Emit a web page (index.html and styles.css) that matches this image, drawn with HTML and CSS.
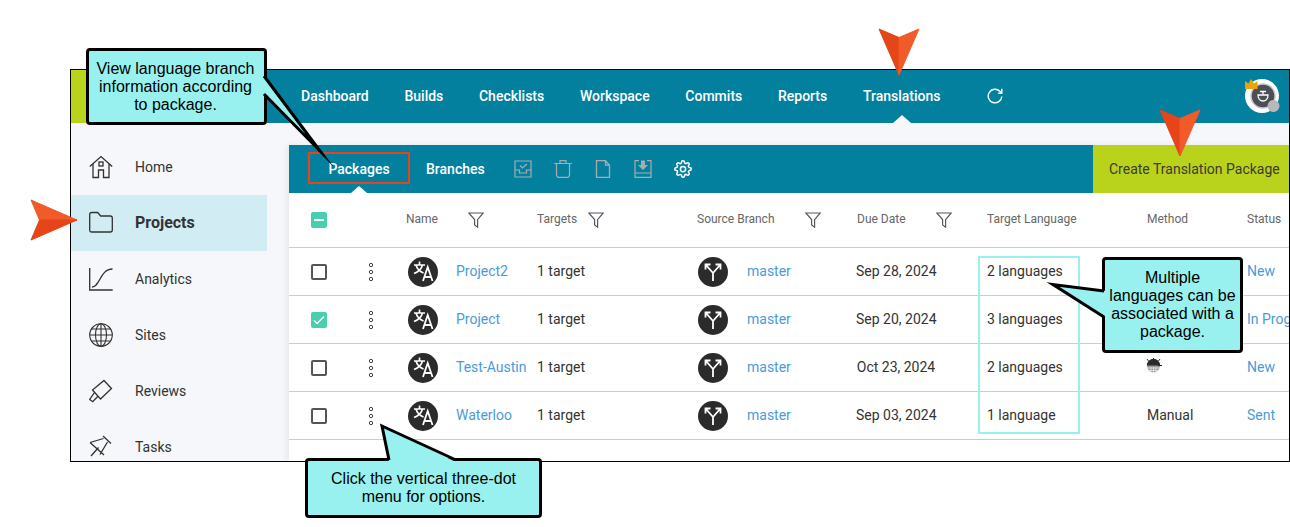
FILE: index.html

```html
<!DOCTYPE html>
<html lang="en">
<head>
  <meta charset="UTF-8" />
  <title>Translations</title>
  <link rel="stylesheet" href="styles.css">
</head>
<body>
  <svg class="defs" width="0" height="0">
    <symbol id="i-filter" viewBox="0 0 16 16">
      <path d="M.8 1h14.400L9.600 7.600v7.600L6.600 13V7.600z" fill="none" stroke="#5a5560" stroke-width="1.200"/>
    </symbol>
    <symbol id="i-dots" viewBox="0 0 8 20">
      <circle cx="4" cy="3" r="1.700"/><circle cx="4" cy="10" r="1.700"/><circle cx="4" cy="17" r="1.700"/>
    </symbol>
    <symbol id="i-translate" viewBox="0 0 30 30">
      <circle cx="15" cy="15" r="15" fill="#2b2b2b"/>
      <path d="M6 8h11M11.500 4.500V8M14.500 8c-1 4-4.500 7-8.500 8.500M8 8c1 4 4 6.500 7.500 8" fill="none" stroke="#fff" stroke-width="1.600"/>
      <path d="M15 24l4.700-14 4.800 14M16.800 20h6" fill="none" stroke="#fff" stroke-width="1.800"/>
    </symbol>
    <symbol id="i-branch" viewBox="0 0 30 30">
      <circle cx="15" cy="15" r="15" fill="#2b2b2b"/>
      <path d="M15 24v-8L8 8M15 16l7-8M7.500 12.500V7.500h5M22.500 12.500V7.500h-5" fill="none" stroke="#fff" stroke-width="1.800"/>
    </symbol>
  </svg>

  <div class="app">
    <header class="topbar">
      <div class="logo"></div>
      <nav class="main-nav">
        <a>Dashboard</a>
        <a>Builds</a>
        <a>Checklists</a>
        <a>Workspace</a>
        <a>Commits</a>
        <a>Reports</a>
        <a class="active">Translations</a>
      </nav>
      <svg class="refresh" width="16" height="16" viewBox="0 0 16 16" fill="none" stroke="#fff" stroke-width="1.400">
        <path d="M14.800 8.500a6.800 6.800 0 1 1-2-5.300L14.600 5"/>
        <path d="M14.800.8v4.500h-3.600"/>
      </svg>
      <svg class="user" width="36" height="36" viewBox="0 0 36 36">
        <circle cx="17" cy="18" r="17" fill="#fff"/>
        <circle cx="18" cy="18" r="12" fill="#4b4f55" stroke="#c4c6c8" stroke-width="1.500"/>
        <path d="M13 17h10c0 4-2.500 6-5 6s-5-2-5-6z" fill="none" stroke="#fff" stroke-width="1.300"/>
        <path d="M15 13.500h6M18 13.500v3" stroke="#fff" stroke-width="1.300"/>
        <path d="M0 3l3.500 2.500L6 1l3 4.500L12.500 3v8H0z" fill="#e6a50f"/>
        <circle cx="28.500" cy="28" r="6" fill="#b9b9b9"/>
      </svg>
    </header>

    <div class="content">
      <aside class="sidebar">
        <a class="side-item">
          <svg width="24" height="24" viewBox="0 0 24 24" fill="none" stroke="#33302f" stroke-width="1.300">
            <path d="M.8 11.500L12 1.500l11.200 10M4 9v13.500h5.500V15h5v7.500H20V9"/>
            <rect x="10" y="7" width="4" height="4"/>
          </svg>
          Home
        </a>
        <a class="side-item active">
          <svg width="24" height="24" viewBox="0 0 24 24" fill="none" stroke="#33302f" stroke-width="1.300">
            <path d="M.7 4.500q0-2 2-2h6l3 3.500h9.600q2 0 2 2v12q0 2-2 2H2.700q-2 0-2-2z"/>
          </svg>
          Projects
        </a>
        <a class="side-item">
          <svg width="24" height="24" viewBox="0 0 24 24" fill="none" stroke="#33302f" stroke-width="1.300">
            <path d="M.7 1v22h23"/>
            <path d="M3 20C11 20 11 2 23.500 2"/>
          </svg>
          Analytics
        </a>
        <a class="side-item">
          <svg width="24" height="24" viewBox="0 0 24 24" fill="none" stroke="#33302f" stroke-width="1.100">
            <circle cx="12" cy="12" r="11.300"/>
            <ellipse cx="12" cy="12" rx="5.500" ry="11.300"/>
            <path d="M12 .7v22.600M.7 12h22.600M2.500 6h19M2.500 18h19"/>
          </svg>
          Sites
        </a>
        <a class="side-item">
          <svg width="24" height="24" viewBox="0 0 24 24" fill="none" stroke="#33302f" stroke-width="1.300">
            <path d="M15 1.500l7.500 8-11 10.500-8-9zM5.500 13.500L.7 20.500l3 2.200 4.800-5"/>
          </svg>
          Reviews
        </a>
        <a class="side-item">
          <svg width="24" height="24" viewBox="0 0 24 24" fill="none" stroke="#33302f" stroke-width="1.300">
            <path d="M1 7.500L14.500 3.500M14 1l8 7.500M18.500 7L11 19.500M1 7.500l14 12.500M2 21l7.500-8.500"/>
          </svg>
          Tasks
        </a>
      </aside>

      <main class="card">
        <div class="toolbar">
          <a class="tab active">Packages</a>
          <a class="tab">Branches</a>
          <div class="tool-icons">
            <svg width="18" height="18" viewBox="0 0 18 18" fill="none" stroke="#a8acae" stroke-width="1.200">
              <path d="M1 1h16v16H1zM1 10h4.500v3h7v-3H17M6 5.500l2.500 2.500L13 4"/>
            </svg>
            <svg width="18" height="18" viewBox="0 0 18 18" fill="none" stroke="#a8acae" stroke-width="1.200">
              <path d="M0 3.500h18M6 3.500V.7h6v2.800M2.500 3.500v12l1.500 1.800h10l1.500-1.800v-12"/>
            </svg>
            <svg width="18" height="18" viewBox="0 0 18 18" fill="none" stroke="#a8acae" stroke-width="1.300">
              <path d="M2.500.7h9l4 4.500v12.100h-13zM11.500.7v4.500h4"/>
            </svg>
            <svg width="18" height="18" viewBox="0 0 18 18" fill="none" stroke="#a8acae" stroke-width="1.200">
              <path d="M5 .7H1v16.600h16V.7h-4M1 13h16"/>
              <path d="M7 .5h4v4.500h3l-5 5-5-5h3z" fill="#a8acae" stroke="none"/>
            </svg>
            <svg width="18" height="18" viewBox="0 0 24 24" fill="none" stroke="#fff" stroke-width="2">
              <circle cx="12" cy="12" r="3.500"/>
              <path d="M19.400 15a1.650 1.650 0 0 0 .33 1.820l.06.06a2 2 0 0 1 0 2.830 2 2 0 0 1-2.830 0l-.06-.06a1.650 1.650 0 0 0-1.820-.33 1.650 1.650 0 0 0-1 1.510V21a2 2 0 0 1-2 2 2 2 0 0 1-2-2v-.09A1.650 1.650 0 0 0 9 19.400a1.650 1.650 0 0 0-1.820.33l-.06.06a2 2 0 0 1-2.830 0 2 2 0 0 1 0-2.830l.06-.06a1.650 1.650 0 0 0 .33-1.820 1.650 1.650 0 0 0-1.510-1H3a2 2 0 0 1-2-2 2 2 0 0 1 2-2h.09A1.650 1.650 0 0 0 4.600 9a1.650 1.650 0 0 0-.33-1.820l-.06-.06a2 2 0 0 1 0-2.830 2 2 0 0 1 2.830 0l.06.06a1.650 1.650 0 0 0 1.820.33H9a1.650 1.650 0 0 0 1-1.510V3a2 2 0 0 1 2-2 2 2 0 0 1 2 2v.09a1.650 1.650 0 0 0 1 1.510 1.650 1.650 0 0 0 1.820-.33l.06-.06a2 2 0 0 1 2.830 0 2 2 0 0 1 0 2.830l-.06.06a1.650 1.650 0 0 0-.33 1.820V9a1.650 1.650 0 0 0 1.510 1H21a2 2 0 0 1 2 2 2 2 0 0 1-2 2h-.09a1.650 1.650 0 0 0-1.510 1z"/>
            </svg>
          </div>
          <a class="create-btn">Create Translation Package</a>
        </div>

        <div class="row head">
          <div><span class="check minus"></span></div>
          <div></div>
          <div class="cell">Name<svg class="filter wide"><use href="#i-filter"/></svg></div>
          <div class="cell">Targets<svg class="filter"><use href="#i-filter"/></svg></div>
          <div class="cell">Source Branch<svg class="filter wide"><use href="#i-filter"/></svg></div>
          <div class="cell">Due Date<svg class="filter wide"><use href="#i-filter"/></svg></div>
          <div class="cell">Target Language</div>
          <div class="cell">Method</div>
          <div class="cell">Status</div>
        </div>

        <div class="row">
          <div><span class="check"></span></div>
          <div><svg class="dots"><use href="#i-dots"/></svg></div>
          <div class="cell name"><svg class="round"><use href="#i-translate"/></svg><a>Project2</a></div>
          <div class="cell">1 target</div>
          <div class="cell branch"><svg class="round"><use href="#i-branch"/></svg><a>master</a></div>
          <div class="cell"><span class="due">Sep 28, 2024</span></div>
          <div class="cell">2 languages</div>
          <div class="cell"></div>
          <div class="cell"><a>New</a></div>
        </div>
        <div class="row">
          <div>
            <span class="check on">
              <svg width="16" height="16" viewBox="0 0 16 16" fill="none" stroke="#fff" stroke-width="1.500"><path d="M3 8.500l3.200 3L13 4.500"/></svg>
            </span>
          </div>
          <div><svg class="dots"><use href="#i-dots"/></svg></div>
          <div class="cell name"><svg class="round"><use href="#i-translate"/></svg><a>Project</a></div>
          <div class="cell">1 target</div>
          <div class="cell branch"><svg class="round"><use href="#i-branch"/></svg><a>master</a></div>
          <div class="cell"><span class="due">Sep 20, 2024</span></div>
          <div class="cell">3 languages</div>
          <div class="cell"></div>
          <div class="cell"><a>In Progress</a></div>
        </div>
        <div class="row">
          <div><span class="check"></span></div>
          <div><svg class="dots"><use href="#i-dots"/></svg></div>
          <div class="cell name"><svg class="round"><use href="#i-translate"/></svg><a>Test-Austin</a></div>
          <div class="cell">1 target</div>
          <div class="cell branch"><svg class="round"><use href="#i-branch"/></svg><a>master</a></div>
          <div class="cell"><span class="due">Oct 23, 2024</span></div>
          <div class="cell">2 languages</div>
          <div class="cell">
            <svg class="method" width="16" height="16" viewBox="0 0 16 16">
              <circle cx="7.500" cy="8" r="6.500" fill="#9a9a9a"/>
              <path d="M.8 7.500a6.700 6.700 0 0 1 13.400 0z" fill="#2b2b2b"/>
              <path d="M1 10h13M2 12.500h11M5 9v6M7.500 9v6M10 9v6" stroke="#f2f2f2" stroke-width=".7"/>
              <path d="M2.500 3L1 1M12.500 3L14 1M7.500 1V0M12 7.500h4" stroke="#2b2b2b"/>
            </svg>
          </div>
          <div class="cell"><a>New</a></div>
        </div>
        <div class="row">
          <div><span class="check"></span></div>
          <div><svg class="dots"><use href="#i-dots"/></svg></div>
          <div class="cell name"><svg class="round"><use href="#i-translate"/></svg><a>Waterloo</a></div>
          <div class="cell">1 target</div>
          <div class="cell branch"><svg class="round"><use href="#i-branch"/></svg><a>master</a></div>
          <div class="cell"><span class="due">Sep 03, 2024</span></div>
          <div class="cell">1 language</div>
          <div class="cell">Manual</div>
          <div class="cell"><a>Sent</a></div>
        </div>
      </main>
    </div>
  </div>

  <!-- annotations on top of the screenshot -->
  <div class="lang-box"></div>

  <div class="callout callout-view">
    View language branch information according to package.
    <svg class="tail">
      <polygon points="174,25 231,100 174,43" fill="#98f1ee"/>
      <polyline points="175,25 231,100 175,43" fill="none" stroke="#000" stroke-width="3" stroke-miterlimit="20"/>
    </svg>
  </div>
  <div class="callout callout-multi">
    Multiple languages can be associated with a package.
    <svg class="tail">
      <polygon points="1,31 -52,24.500 1,57" fill="#98f1ee"/>
      <polyline points="-1,31 -52,24.500 -1,57" fill="none" stroke="#000" stroke-width="3" stroke-miterlimit="20"/>
    </svg>
  </div>
  <div class="callout callout-dots">
    Click the vertical three-dot menu for options.
    <svg class="tail">
      <polygon points="81,1 74,-35 148,1" fill="#98f1ee"/>
      <polyline points="81,-1 74,-35 148,-1" fill="none" stroke="#000" stroke-width="3" stroke-miterlimit="20"/>
    </svg>
  </div>

  <svg class="arrow arrow-nav" width="42" height="48" viewBox="0 0 42 48">
    <path d="M1 1l20 8.500V47z" fill="#e64419" stroke="#e64419" stroke-linejoin="round"/>
    <path d="M41 1L21 9.500V47z" fill="#f15a29" stroke="#f15a29" stroke-linejoin="round"/>
  </svg>
  <svg class="arrow arrow-create" width="42" height="48" viewBox="0 0 42 48">
    <path d="M1 1l20 8.500V47z" fill="#e64419" stroke="#e64419" stroke-linejoin="round"/>
    <path d="M41 1L21 9.500V47z" fill="#f15a29" stroke="#f15a29" stroke-linejoin="round"/>
  </svg>
  <svg class="arrow arrow-side" width="48" height="42" viewBox="0 0 48 42">
    <path d="M1 1l8.500 20H47z" fill="#f15a29" stroke="#f15a29" stroke-linejoin="round"/>
    <path d="M1 41l8.500-20H47z" fill="#e64419" stroke="#e64419" stroke-linejoin="round"/>
  </svg>
</body>
</html>
```

FILE: styles.css

```css
html, body {
  margin: 0;
  height: 100%;
  background: #fff;
  font-family: Roboto, sans-serif;
  font-size: 14px;
  color: #333;
}

body {
  position: relative;
  box-sizing: border-box;
  width: 1290px;
  height: 527px;
  padding: 69px 0 0 70px;
  overflow: hidden;
}

.defs {
  position: absolute;
}

.app {
  box-sizing: border-box;
  width: 1220px;
  height: 393px;
  border: 1px solid #000;
  display: flex;
  flex-direction: column;
  overflow: hidden;
}

/* top bar */
.topbar {
  height: 53px;
  flex: none;
  display: flex;
  align-items: center;
  background: #04809f;
  padding-right: 8px;
}

.logo {
  width: 196px;
  align-self: stretch;
  background: #b9d21c;
}

.main-nav {
  display: flex;
  align-self: stretch;
  gap: 35.7px;
  margin-left: 34px;
}

.main-nav a {
  position: relative;
  display: flex;
  align-items: center;
  padding-bottom: 1px;
  color: #fff;
  font-weight: 500;
}

.main-nav a.active::after {
  content: "";
  position: absolute;
  left: 50%;
  bottom: 0;
  margin-left: -9px;
  border: 9px solid transparent;
  border-top: 0;
  border-bottom: 8px solid #f5f7fb;
}

.refresh {
  margin-left: 46px;
  margin-bottom: 2px;
}

.user {
  margin-left: auto;
  margin-bottom: 2px;
}

/* sidebar + content */
.content {
  flex: 1;
  display: flex;
  min-height: 0;
  background: #f5f7fb;
}

.sidebar {
  width: 218px;
  flex: none;
  padding-top: 16px;
}

.side-item {
  width: 196px;
  height: 56px;
  display: flex;
  align-items: center;
  gap: 22px;
  padding-left: 18px;
  box-sizing: border-box;
}

.side-item.active {
  background: #d2ecf3;
  font-size: 16px;
  font-weight: 700;
  padding-bottom: 2px;
}

.card {
  flex: 1;
  min-width: 0;
  margin-top: 22px;
  background: #fff;
  box-shadow: -3px 0 6px rgba(0, 0, 0, 0.06);
}

.toolbar {
  height: 48px;
  display: flex;
  align-items: center;
  background: #04809f;
  padding-left: 19px;
}

.tab {
  color: #fff;
  font-weight: 500;
  margin-right: 16px;
  position: relative;
}

.tab.active {
  box-sizing: border-box;
  width: 102px;
  height: 32px;
  margin-top: -2px;
  padding-top: 2px;
  display: flex;
  align-items: center;
  justify-content: center;
  border: 2px solid #e8431f;
}

.tab.active::after {
  content: "";
  position: absolute;
  left: 50%;
  bottom: -11px;
  margin-left: -8px;
  border: 8px solid transparent;
  border-top: 0;
  border-bottom: 7px solid #fff;
}

.tool-icons {
  display: flex;
  gap: 22px;
  margin-left: 13px;
}

.create-btn {
  margin-left: auto;
  width: 196px;
  flex: none;
  height: 48px;
  box-sizing: border-box;
  padding-left: 16px;
  display: flex;
  align-items: center;
  background: #b9d21c;
  color: #3d3a2c;
}

/* table */
.row {
  box-sizing: border-box;
  height: 48px;
  padding-left: 22px;
  display: grid;
  grid-template-columns: 54px 41px 131px 160px 160px 130px 160px 100px 60px;
  align-items: center;
  border-bottom: 1px solid #ccc;
  overflow: hidden;
}

.row.head {
  height: 55px;
  font-size: 12px;
  color: #666;
}

.row > div:first-child {
  display: flex;
  padding-top: 1px;
}

.row.head > div:first-child {
  padding-top: 0;
}

.cell {
  display: flex;
  align-items: center;
  padding-bottom: 2px;
  white-space: nowrap;
}

.cell a {
  color: #4a9bd9;
}

.check {
  box-sizing: border-box;
  width: 16px;
  height: 16px;
  border: 2px solid #555;
  border-radius: 2px;
  display: block;
}

.check.on, .check.minus {
  border: 0;
  background: #47cfae;
}

.check.on svg {
  display: block;
}

.check.minus {
  position: relative;
}

.check.minus::after {
  content: "";
  position: absolute;
  left: 3px;
  right: 3px;
  top: 7px;
  height: 2px;
  background: #fff;
}

.filter {
  width: 16px;
  height: 16px;
  margin: 2px 0 0 11px;
}

.filter.wide {
  margin-left: 30px;
}

.dots {
  display: block;
  width: 8px;
  height: 20px;
  margin: 1px 0 0 2px;
  fill: none;
  stroke: #3f3f52;
  stroke-width: 1;
}

.round {
  width: 30px;
  height: 30px;
  flex: none;
}

.name .round {
  margin: 3px 18px 0 2px;
}

.branch .round {
  margin: 3px 19px 0 1px;
}

.due {
  width: 80px;
  margin-left: -1px;
  text-align: center;
}

.method {
  margin: -2px 0 0 -1px;
}

/* annotations */
.lang-box {
  position: absolute;
  left: 978px;
  top: 256px;
  width: 102px;
  height: 178px;
  box-sizing: border-box;
  border: 2px solid #98f1ee;
}

.callout {
  position: absolute;
  box-sizing: border-box;
  display: flex;
  align-items: center;
  justify-content: center;
  text-align: center;
  background: #98f1ee;
  border: 3px solid #000;
  border-radius: 4px;
  color: #000;
  font-family: "Liberation Sans", Arial, sans-serif;
  font-size: 16px;
  line-height: 18px;
}

.callout-view {
  left: 86px;
  top: 48px;
  width: 181px;
  height: 77px;
  padding: 0 6px 0 4px;
}

.callout-multi {
  left: 1102px;
  top: 257px;
  width: 141px;
  height: 96px;
  padding: 0 2px;
}

.callout-dots {
  left: 305px;
  top: 458px;
  width: 237px;
  height: 60px;
  padding: 0 14px;
}

.tail {
  position: absolute;
  left: 0;
  top: 0;
  width: 1px;
  height: 1px;
  overflow: visible;
}

.arrow {
  position: absolute;
}

.arrow-nav {
  left: 878px;
  top: 28px;
}

.arrow-create {
  left: 1159px;
  top: 109px;
}

.arrow-side {
  left: 30px;
  top: 199px;
}
```
